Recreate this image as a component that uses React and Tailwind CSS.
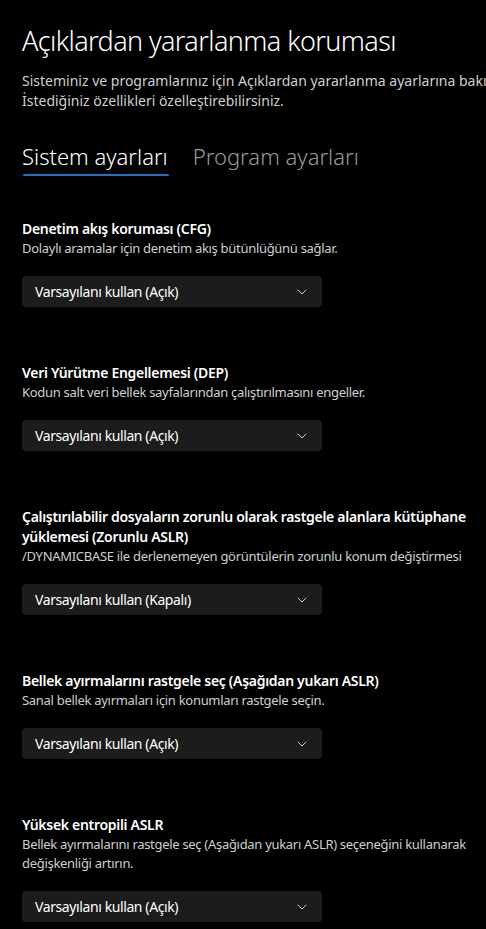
import { useState } from "react";

const sections = [
  {
    title: "Denetim akış koruması (CFG)",
    desc: "Dolaylı aramalar için denetim akış bütünlüğünü sağlar.",
    value: "Varsayılanı kullan (Açık)",
  },
  {
    title: "Veri Yürütme Engellemesi (DEP)",
    desc: "Kodun salt veri bellek sayfalarından çalıştırılmasını engeller.",
    value: "Varsayılanı kullan (Açık)",
  },
  {
    title: "Çalıştırılabilir dosyaların zorunlu olarak rastgele alanlara kütüphane yüklemesi (Zorunlu ASLR)",
    desc: "/DYNAMICBASE ile derlenemeyen görüntülerin zorunlu konum değiştirmesi",
    value: "Varsayılanı kullan (Kapalı)",
  },
  {
    title: "Bellek ayırmalarını rastgele seç (Aşağıdan yukarı ASLR)",
    desc: "Sanal bellek ayırmaları için konumları rastgele seçin.",
    value: "Varsayılanı kullan (Açık)",
  },
  {
    title: "Yüksek entropili ASLR",
    desc: "Bellek ayırmalarını rastgele seç (Aşağıdan yukarı ASLR) seçeneğini kullanarak değişkenliği artırın.",
    value: "Varsayılanı kullan (Açık)",
  },
];

const Chevron = () => (
  <svg width="10" height="6" viewBox="0 0 10 6" fill="none">
    <path d="M1 1l4 4 4-4" stroke="#cfcfcf" strokeWidth="1" strokeLinecap="round" strokeLinejoin="round" />
  </svg>
);

const Setting = ({ title, desc, value }) => (
  <div className="flex flex-col">
    <div className="text-[14px] leading-[20px] font-semibold tracking-[-0.3px] text-white">{title}</div>
    <div className="text-[13px] leading-[19px] tracking-[-0.3px] text-[#cfcfcf]">{desc}</div>
    <button className="mt-[18px] flex h-[31px] w-[300px] items-center justify-between rounded-[4px] bg-[#1c1c1c] pl-[13px] pr-[15px] text-left text-[14px] tracking-[-0.4px] text-white">
      <span>{value}</span>
      <Chevron />
    </button>
  </div>
);

const App = () => {
  const [tab, setTab] = useState(0);

  return (
    <div className="min-h-screen overflow-hidden bg-black pl-[22px] pt-[23px] text-white [font-family:'Noto_Sans',sans-serif]">
      <h1 className="text-[27px] font-light leading-[36px] tracking-[-0.6px] text-white">Açıklardan yararlanma koruması</h1>
      <div className="mt-[12px] text-[14px] leading-[20px] text-[#cfcfcf]">
        <div className="whitespace-nowrap">Sisteminiz ve programlarınız için Açıklardan yararlanma ayarlarına bakın.</div>
        <div>İstediğiniz özellikleri özelleştirebilirsiniz.</div>
      </div>

      <div className="mt-[30px] flex gap-[25px]">
        {["Sistem ayarları", "Program ayarları"].map((t, i) => (
          <button
            key={t}
            onClick={() => setTab(i)}
            className={
              "flex flex-col items-start text-[22px] font-light leading-[30px] " +
              (tab === i ? "text-white" : "text-[#9a9a9a]")
            }
          >
            <span>{t}</span>
            <span className={"mt-[3px] ml-[1px] h-[2px] w-full rounded-full " + (tab === i ? "bg-[#1a72c9]" : "bg-transparent")} />
          </button>
        ))}
      </div>

      <div className="mt-[43px] flex w-[464px] flex-col gap-[56px] pb-[10px]">
        {sections.map((s) => (
          <Setting key={s.title} {...s} />
        ))}
      </div>
    </div>
  );
};

export default App;
